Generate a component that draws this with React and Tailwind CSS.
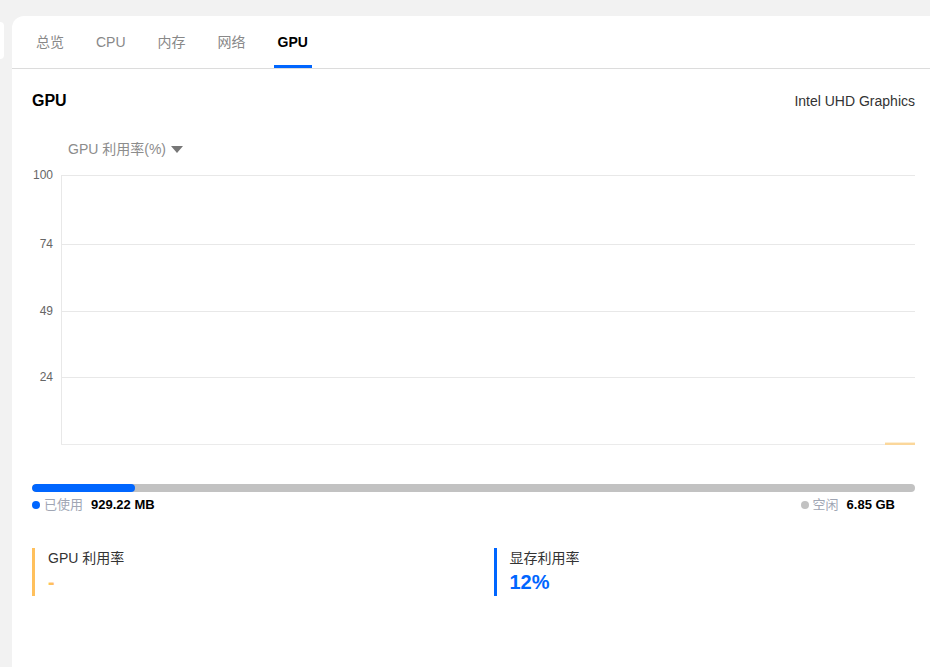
import { useState } from 'react'

const TABS = ['总览', 'CPU', '内存', '网络', 'GPU']

// y offset (px) of each gridline inside the plot, measured from the top
const TICKS = [
  { label: '100', y: 0 },
  { label: '74', y: 69 },
  { label: '49', y: 136 },
  { label: '24', y: 202 },
]

const PLOT_W = 854
const PLOT_H = 270

function Chart() {
  return (
    <div className="flex mt-4">
      <div className="relative w-[29px] h-[270px] shrink-0">
        {TICKS.map((t) => (
          <span
            key={t.label}
            className="absolute right-[8px] text-xs leading-4 text-[#666] -translate-y-1/2"
            style={{ top: t.y }}
          >
            {t.label}
          </span>
        ))}
      </div>
      <svg width={PLOT_W} height={PLOT_H} className="block shrink-0">
        {TICKS.map((t) => (
          <rect key={t.label} x="0" y={t.y} width={PLOT_W} height="1" fill="#e8e8e8" />
        ))}
        <rect x="0" y="0" width="1" height={PLOT_H} fill="#e8e8e8" />
        <rect x="0" y={PLOT_H - 1} width={PLOT_W} height="1" fill="#ebebeb" />
        <rect x="824" y={PLOT_H - 3} width="30" height="1" fill="#fdefd5" />
        <rect x="824" y={PLOT_H - 2} width="30" height="2" fill="#fbd79b" />
      </svg>
    </div>
  )
}

function Stat({ label, value, color, valueClass }) {
  return (
    <div className="flex border-l-[3px] pl-[13px]" style={{ borderColor: color }}>
      <div className="flex flex-col">
        <span className="text-sm leading-5 text-[#333]">{label}</span>
        <span className={`text-xl leading-7 font-bold ${valueClass}`}>{value}</span>
      </div>
    </div>
  )
}

export default function App() {
  const [tab, setTab] = useState('GPU')
  const used = 929.22
  const free = 6.85 * 1024
  const pct = (used / (used + free)) * 100

  return (
    <div
      className="flex h-[667px] overflow-hidden bg-[#f2f2f2]"
      style={{ fontFamily: '"Liberation Sans", "Noto Sans CJK SC", sans-serif' }}
    >
      <div className="w-[4px] h-[37px] mt-[22px] shrink-0 bg-white rounded-r-[4px]" />
      <div className="flex-1 ml-[8px] mt-4 bg-white rounded-tl-xl flex flex-col">
        <div className="flex h-[53px] border-b border-[#dcdcdc] pl-[20px] gap-6">
          {TABS.map((t) => {
            const active = t === tab
            return (
              <button
                key={t}
                onClick={() => setTab(t)}
                className="flex flex-col h-full"
              >
                <span
                  className={
                    'flex-1 flex items-center px-1 pt-[2px] text-sm ' +
                    (active ? 'font-bold text-black' : 'text-[#888]')
                  }
                >
                  {t}
                </span>
                <span className={'h-[3px] w-full ' + (active ? 'bg-[#0066ff]' : '')} />
              </button>
            )
          })}
        </div>

        <div className="flex flex-col pl-5 pr-[15px] pt-5">
          <div className="flex items-center justify-between h-6">
            <span className="text-base font-bold text-black">GPU</span>
            <span className="text-sm text-[#333]">Intel UHD Graphics</span>
          </div>

          <div className="flex items-center mt-[26px] ml-[36px] h-5 gap-[5px] text-sm text-[#8c8c8c]">
            <span>GPU 利用率(%)</span>
            <svg width="12" height="7" viewBox="0 0 12 7">
              <path d="M0 0h12L6 7z" fill="#777" />
            </svg>
          </div>

          <Chart />

          <div className="mt-[39px] h-2 rounded-full bg-[#c2c2c2] overflow-hidden">
            <div className="h-full rounded-full bg-[#0066ff]" style={{ width: `${pct}%` }} />
          </div>

          <div className="flex items-center justify-between mt-1 pr-5 text-[13px] leading-[18px]">
            <div className="flex items-center">
              <span className="w-2 h-2 rounded-full bg-[#0066ff]" />
              <span className="ml-1 text-[#a0a6b4]">已使用</span>
              <span className="ml-2 font-bold text-black">929.22 MB</span>
            </div>
            <div className="flex items-center">
              <span className="w-2 h-2 rounded-full bg-[#c2c2c2]" />
              <span className="ml-1 text-[#a0a6b4]">空闲</span>
              <span className="ml-2 font-bold text-black">6.85 GB</span>
            </div>
          </div>

          <div className="grid grid-cols-2 gap-10 mt-[34px]">
            <Stat label="GPU 利用率" value="-" color="#ffc05c" valueClass="text-[#ffc05c]" />
            <Stat label="显存利用率" value="12%" color="#0066ff" valueClass="text-[#0066ff]" />
          </div>
        </div>
      </div>
    </div>
  )
}
